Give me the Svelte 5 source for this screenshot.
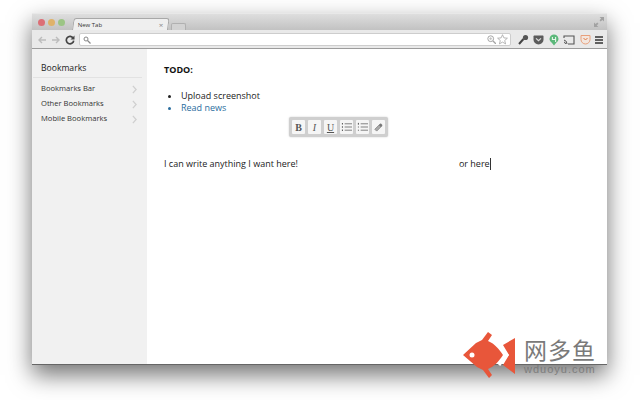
<script lang="ts">
	const bookmarks = ['Bookmarks Bar', 'Other Bookmarks', 'Mobile Bookmarks'];
</script>

<div class="stage">
	<div class="window">
		<div class="titlebar">
			<div class="lights">
				<span class="light red"></span>
				<span class="light yellow"></span>
				<span class="light green"></span>
			</div>
			<div class="tab">
				<span class="tab-title">New Tab</span>
				<span class="tab-close">×</span>
			</div>
			<div class="new-tab"></div>
			<span class="grow"></span>
			<svg class="expand" width="10" height="10" viewBox="0 0 9 9">
				<path d="M5 0h4v4L7.600 2.600 6 4 5 3l1.400-1.600zM4 9H0V5l1.400 1.400L3 5l1 1-1.600 1.600z" fill="#a2a2a2" />
			</svg>
		</div>
		<div class="toolbar">
			<svg class="nav" width="10" height="10" viewBox="0 0 10 10">
				<path d="M9 5H2M5 2 2 5l3 3" fill="none" stroke="#bcbcbc" stroke-width="1.400" />
			</svg>
			<svg class="nav" width="10" height="10" viewBox="0 0 10 10">
				<path d="M1 5h7M5 2l3 3-3 3" fill="none" stroke="#bcbcbc" stroke-width="1.400" />
			</svg>
			<svg class="nav" width="10" height="10" viewBox="0 0 10 10">
				<path d="M8.200 3.200A3.700 3.700 0 1 0 8.700 5.600" fill="none" stroke="#444" stroke-width="1.700" />
				<path d="M9.500 .5v4h-4z" fill="#444" />
			</svg>
			<div class="omnibox">
				<svg width="8" height="8" viewBox="0 0 8 8">
					<circle cx="3" cy="3" r="2" fill="none" stroke="#888" />
					<path d="m4.500 4.500 3 3" stroke="#888" stroke-width="1.200" />
				</svg>
				<span class="grow"></span>
				<svg width="9" height="9" viewBox="0 0 9 9">
					<circle cx="3.700" cy="3.700" r="2.900" fill="none" stroke="#a5a5a5" />
					<path d="m6 6 3 3" stroke="#a5a5a5" stroke-width="1.300" />
					<path d="M2.200 3.700h3M3.700 2.200v3" stroke="#b5b5b5" stroke-width=".8" />
				</svg>
				<svg width="11" height="11" viewBox="0 0 11 11">
					<path d="m5.500.7 1.400 3.200 3.500.3-2.700 2.300.9 3.400-3.100-1.800-3.100 1.800.9-3.400L.6 4.200l3.500-.3z" fill="#fff" stroke="#a5a5a5" stroke-width=".8" />
				</svg>
			</div>
			<div class="ext">
				<svg width="11" height="11" viewBox="0 0 11 11">
					<path d="M1 10 5.500 5" stroke="#444" stroke-width="2" />
					<circle cx="7.500" cy="3.500" r="2.600" fill="#555" />
				</svg>
				<svg width="11" height="10" viewBox="0 0 11 10">
					<path d="M.5 1.500C.5.8 1 .5 1.500.5h8c.6 0 1 .3 1 1v3a5 5 0 0 1-10 0z" fill="#5c5c5c" />
					<path d="m3 3.400 2.500 2.300L8 3.400" fill="none" stroke="#ddd" stroke-width="1.200" />
				</svg>
				<svg width="10" height="12" viewBox="0 0 10 12">
					<path d="M5 .5a4.500 4.500 0 0 1 2 8.500L5 11.500 3 9A4.500 4.500 0 0 1 5 .5z" fill="#5cb87a" />
					<path d="M3.400 3v2.500h3.200M6.600 3v5" fill="none" stroke="#e8f5ea" stroke-width="1.100" />
				</svg>
				<svg width="12" height="10" viewBox="0 0 12 10">
					<path d="M1 3V1h10v8H5" fill="none" stroke="#555" stroke-width="1.100" />
					<path d="M1 5a4 4 0 0 1 3 4M1 7a2 2 0 0 1 1.500 2" fill="none" stroke="#555" />
				</svg>
				<svg width="11" height="11" viewBox="0 0 11 11">
					<path d="M1 1.500h9v4a4.500 4.500 0 0 1-9 0z" fill="#f3e6de" stroke="#e8a07c" />
					<path d="m3.500 4 2 2 2-2" fill="none" stroke="#e07a45" />
				</svg>
				<svg width="8" height="8" viewBox="0 0 8 8">
					<path d="M0 1h8M0 4h8M0 7h8" stroke="#333" stroke-width="1.500" />
				</svg>
			</div>
		</div>
		<div class="content">
			<aside class="sidebar">
				<div class="side-title">Bookmarks</div>
				<ul class="side-list">
					{#each bookmarks as b}
						<li>
							<span>{b}</span>
							<svg width="5" height="9" viewBox="0 0 6 11">
								<path d="m1 1 4 4.500L1 10" fill="none" stroke="#cfcfcf" stroke-width="1.500" />
							</svg>
						</li>
					{/each}
				</ul>
			</aside>
			<main class="page">
				<p class="todo">TODO:</p>
				<ul class="tasks">
					<li>Upload screenshot</li>
					<li class="link">Read news</li>
				</ul>
				<div class="format-row">
					<div class="format">
						<button class="bold">B</button>
						<button class="italic">I</button>
						<button class="underline">U</button>
						<button aria-label="bullet list">
							<svg width="12" height="10" viewBox="0 0 12 10">
								<path d="M1 1.500h1M1 5h1M1 8.500h1" stroke="#444" stroke-width="1.500" />
								<path d="M4 1.500h8M4 5h8M4 8.500h8" stroke="#777" />
							</svg>
						</button>
						<button aria-label="numbered list">
							<svg width="12" height="10" viewBox="0 0 12 10">
								<path d="M1.500 .5v2M1 5h1M1 8.500h1" stroke="#444" />
								<path d="M4 1.500h8M4 5h8M4 8.500h8" stroke="#777" />
							</svg>
						</button>
						<button aria-label="eraser">
							<svg width="11" height="11" viewBox="0 0 11 11">
								<path d="M1.500 8 7 2.500l2 2L3.500 10z" fill="#aaa" stroke="#888" />
								<path d="M6 3.500 8 1.500l2 2-2 2z" fill="#777" />
							</svg>
						</button>
					</div>
				</div>
				<div class="free-text">
					<span>I can write anything I want here!</span>
					<span class="here">or here<span class="caret"></span></span>
				</div>
			</main>
		</div>
	</div>

	<div class="watermark">
		<svg width="54" height="46" viewBox="0 0 54 46">
			<path d="M1 23 14 11 20 8 26 0l4 3-4 6c7 3 11 8 15 14-4 6-8 11-15 14l4 6-3 3-6-8-6-3z" fill="#e8563a" />
			<path d="M53 6 41 13 47 23 41 33 53 42z" fill="#e8563a" />
			<path d="m37 13 8 10-8 10" fill="none" stroke="#fff" stroke-width="3" />
			<circle cx="10" cy="23" r="2.500" fill="#fff" />
		</svg>
		<div class="wm-text">
			<span class="wm-cn">网多鱼</span>
			<span class="wm-en">wduoyu.com</span>
		</div>
	</div>
</div>

<style>
	:global(body) {
		margin: 0;
		background: #fff;
	}
	.stage {
		position: relative;
		width: 640px;
		height: 400px;
		overflow: hidden;
		padding: 13px 0 0 32px;
		box-sizing: border-box;
		font-family: 'Open Sans', 'Liberation Sans', sans-serif;
	}
	.window {
		width: 575px;
		height: 352px;
		display: flex;
		flex-direction: column;
		box-shadow: 0 10px 22px rgba(0, 0, 0, 0.55);
		border-bottom: 1px solid #666;
		box-sizing: border-box;
	}
	.titlebar {
		flex: 0 0 auto;
		height: 17px;
		display: flex;
		align-items: flex-end;
		padding: 0 3px 0 6px;
		box-sizing: border-box;
		background: linear-gradient(#dedede, #c2c2c2);
		border-top: 1px solid #e8e8e8;
	}
	.lights {
		display: flex;
		gap: 3px;
		align-self: flex-start;
		padding-top: 5px;
	}
	.light {
		width: 7px;
		height: 7px;
		border-radius: 50%;
	}
	.red {
		background: #dc6f76;
	}
	.yellow {
		background: #dfb26a;
	}
	.green {
		background: #9cc585;
	}
	.tab {
		width: 96px;
		height: 12px;
		margin-left: 7px;
		padding: 0 4px 0 4px;
		display: flex;
		align-items: center;
		justify-content: space-between;
		box-sizing: border-box;
		background: #efefef;
		border: 1px solid #a8a8a8;
		border-bottom: none;
		border-radius: 3px 3px 0 0;
		transform: skewX(-8deg);
		transform-origin: bottom;
	}
	.tab-title {
		font-size: 6px;
		color: #333;
		transform: skewX(8deg);
	}
	.tab-close {
		font-size: 8px;
		line-height: 8px;
		color: #8a8a8a;
		transform: skewX(8deg);
	}
	.new-tab {
		width: 13px;
		height: 6px;
		margin-left: 3px;
		background: #d2d2d2;
		border: 1px solid #b0b0b0;
		border-bottom: none;
		border-radius: 2px 2px 0 0;
	}
	.grow {
		flex: 1;
	}
	.expand {
		align-self: center;
	}
	.toolbar {
		flex: 0 0 auto;
		height: 19px;
		display: flex;
		align-items: center;
		gap: 4px;
		padding: 1px 4px 0 5px;
		box-sizing: border-box;
		background: #e9e9e9;
		border-bottom: 1px solid #9c9c9c;
	}
	.nav {
		flex: 0 0 auto;
	}
	.omnibox {
		width: 432px;
		height: 13px;
		margin-left: 0;
		padding: 0 2px 0 3px;
		display: flex;
		align-items: center;
		gap: 1px;
		box-sizing: border-box;
		background: #fff;
		border: 1px solid #cdcdcd;
		border-radius: 2px;
	}
	.ext {
		flex: 1;
		display: flex;
		align-items: center;
		justify-content: space-between;
		padding: 0 0 0 3px;
	}
	.content {
		flex: 1;
		min-height: 0;
		display: flex;
		background: #fff;
	}
	.sidebar {
		width: 115px;
		flex: 0 0 auto;
		padding: 13px 5px 0 1px;
		box-sizing: border-box;
		background: #f1f1f1;
	}
	.side-title {
		padding: 0 0 2px 8px;
		font-size: 8.600px;
		line-height: 13px;
		color: #222;
		border-bottom: 1px solid #e2e2e2;
	}
	.side-list {
		list-style: none;
		margin: 2px 0 0;
		padding: 0 5px 0 8px;
	}
	.side-list li {
		height: 15.400px;
		display: flex;
		align-items: center;
		justify-content: space-between;
		font-size: 7.600px;
		color: #333;
	}
	.side-list svg {
		margin: 3px 0 0;
	}
	.page {
		flex: 1;
		min-width: 0;
		padding: 15px 0 0 17px;
		font-size: 9px;
		line-height: 12px;
		color: #222;
	}
	.todo {
		margin: 0;
		font-weight: 700;
		color: #111;
	}
	.tasks {
		margin: 14px 0 0;
		padding: 0 0 0 17px;
	}
	.link {
		color: #2a6d9e;
	}
	.format-row {
		display: flex;
		margin: 3px 0 0 125px;
	}
	.format {
		display: flex;
		gap: 3px;
		padding: 3px;
		background: #cfcfcf;
		border-radius: 2px;
		box-shadow: 0 0 2px #cfcfcf;
	}
	.format button {
		width: 13px;
		height: 14px;
		padding: 0;
		display: flex;
		align-items: center;
		justify-content: center;
		background: #f5f5f5;
		border: none;
		border-radius: 1px;
		font-family: 'Liberation Serif', serif;
		font-size: 10px;
		color: #555;
	}
	.bold {
		font-weight: 700;
	}
	.italic {
		font-style: italic;
	}
	.underline {
		text-decoration: underline;
	}
	.format svg {
		width: 11px;
		height: 10px;
	}
	.free-text {
		display: flex;
		margin-top: 21px;
	}
	.here {
		margin-left: 161px;
		display: inline-flex;
		align-items: center;
	}
	.caret {
		width: 1px;
		height: 12px;
		background: #333;
	}
	.watermark {
		position: absolute;
		left: 462px;
		top: 332px;
		display: flex;
		align-items: flex-start;
		gap: 8px;
	}
	.wm-text {
		display: flex;
		flex-direction: column;
		padding-top: 6px;
	}
	.wm-cn {
		font-family: 'Noto Sans CJK SC', sans-serif;
		font-size: 23px;
		line-height: 23px;
		letter-spacing: 1px;
		color: #7a7a7a;
	}
	.wm-en {
		margin-top: 3px;
		font-family: 'Liberation Sans', sans-serif;
		font-size: 11px;
		line-height: 11px;
		letter-spacing: 1px;
		color: #6f6f6f;
		opacity: 0.75;
	}
</style>
